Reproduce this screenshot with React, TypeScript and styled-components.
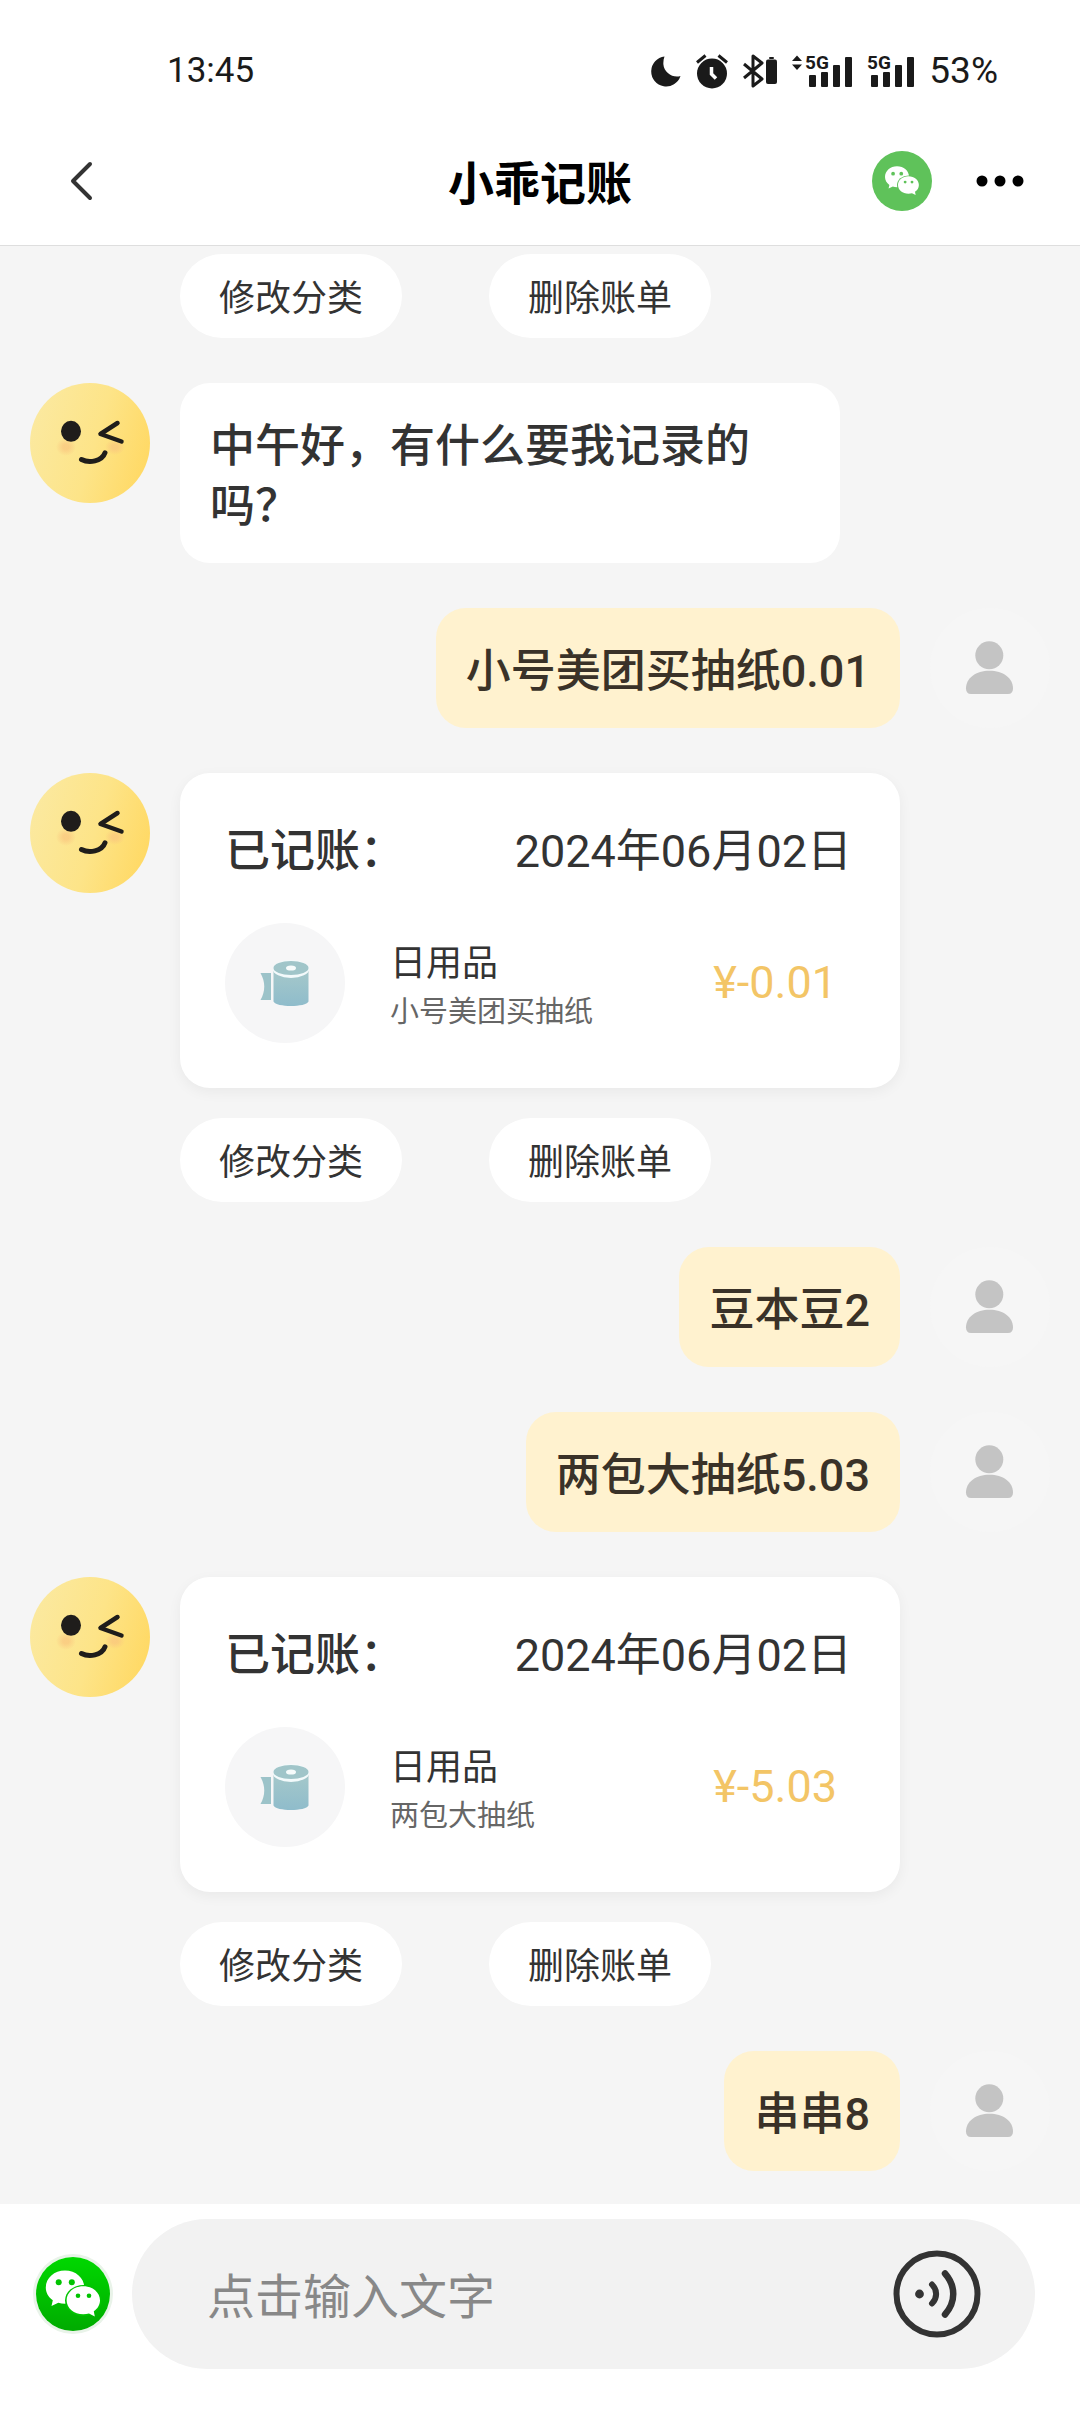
import React from "react";
import styled, { createGlobalStyle } from "styled-components";

const GlobalStyle = createGlobalStyle`
  * { box-sizing: border-box; }
  body {
    margin: 0;
    background: #ffffff;
    color: #333333;
    font-family: Roboto, "Noto Sans CJK SC", sans-serif;
  }
  button, input { font-family: inherit; color: inherit; }
  button { border: 0; padding: 0; background: none; cursor: pointer; }
  svg { display: block; flex: none; }
  p, h1, h2 { margin: 0; }
`;

const Screen = styled.div`
  min-height: 100vh;
  display: flex;
  flex-direction: column;
`;

const StatusBar = styled.div`
  height: 116px;
  padding: 26px 82px 0 167px;
  display: flex;
  align-items: center;
  justify-content: space-between;
  color: #1a1a1a;
  font-size: 35px;
  line-height: 42px;
`;

const StatusIcons = styled.div`
  display: flex;
  align-items: center;
  gap: 15px;
`;

const BatteryLevel = styled.span`
  font-size: 37px;
`;

const Header = styled.header`
  height: 130px;
  padding: 0 56px;
  display: grid;
  grid-template-columns: 1fr auto 1fr;
  align-items: center;
  border-bottom: 1px solid #dedede;
`;

const Title = styled.h1`
  padding-top: 6px;
  color: #000000;
  font-size: 46px;
  line-height: 60px;
  font-weight: 700;
`;

const HeaderTools = styled.div`
  display: flex;
  align-items: center;
  justify-content: flex-end;
  gap: 44px;
`;

const IconButton = styled.button`
  display: flex;
  align-items: center;
  justify-self: start;
`;

const BackButton = styled(IconButton)`
  padding: 0 14px;
`;

const WechatButton = styled.button<{ $size: number; $fill: string; $halo?: boolean }>`
  flex: none;
  width: ${(p) => p.$size}px;
  height: ${(p) => p.$size}px;
  border-radius: 50%;
  background: ${(p) => p.$fill};
  box-shadow: ${(p) => (p.$halo ? "0 0 0 3px #e9f3e9" : "none")};
`;

const Chat = styled.main`
  flex: 1;
  padding: 8px 30px 33px;
  display: flex;
  flex-direction: column;
  gap: 45px;
  background: #f5f5f5;
`;

const MessageRow = styled.div<{ $mine?: boolean }>`
  display: flex;
  align-items: flex-start;
  justify-content: ${(p) => (p.$mine ? "flex-end" : "flex-start")};
  gap: 30px;
`;

const MessageBody = styled.div`
  flex: 0 1 720px;
  min-width: 0;
  display: flex;
  flex-direction: column;
  gap: 30px;
`;

const AvatarSpace = styled.div`
  flex: none;
  width: 120px;
`;

const Bubble = styled.p<{ $mine?: boolean }>`
  max-width: 660px;
  padding: 34px 30px 26px;
  border-radius: 30px;
  background: ${(p) => (p.$mine ? "#fff2cf" : "#ffffff")};
  color: ${(p) => (p.$mine ? "#3a3228" : "#333333")};
  font-size: 45px;
  line-height: 60px;
  font-weight: 500;
`;

const Card = styled.section`
  padding: 49px 48px 45px 45px;
  border-radius: 30px;
  background: #ffffff;
  box-shadow: 0 4px 14px rgba(0, 0, 0, 0.05);
  display: flex;
  flex-direction: column;
  gap: 41px;
`;

const CardHead = styled.div`
  display: flex;
  justify-content: space-between;
  font-size: 45px;
  line-height: 60px;
`;

const CardTitle = styled.h2`
  font-size: inherit;
  font-weight: 500;
`;

const Entry = styled.div`
  display: flex;
  align-items: center;
  gap: 45px;
  padding-right: 15px;
`;

const EntryText = styled.div`
  flex: 1;
  padding-top: 4px;
`;

const Category = styled.p`
  font-size: 36px;
  line-height: 54px;
`;

const Note = styled.p`
  color: #666666;
  font-size: 29px;
  line-height: 42px;
`;

const Amount = styled.span`
  color: #f3c566;
  font-size: 45px;
  line-height: 60px;
`;

const Actions = styled.div`
  display: flex;
  gap: 87px;
`;

const Pill = styled.button`
  height: 84px;
  padding: 6px 39px 0;
  border-radius: 42px;
  background: #ffffff;
  font-size: 36px;
  line-height: 54px;
`;

const Composer = styled.footer`
  padding: 15px 45px 43px 36px;
  display: flex;
  align-items: center;
  gap: 22px;
  background: #ffffff;
`;

const Field = styled.div`
  flex: 1;
  height: 150px;
  padding: 0 54px 0 75px;
  border-radius: 75px;
  background: #f2f2f2;
  display: flex;
  align-items: center;
`;

const TextInput = styled.input`
  flex: 1;
  min-width: 0;
  height: 80px;
  padding: 6px 0 0;
  border: 0;
  outline: 0;
  background: transparent;
  font-size: 48px;
  &::placeholder { color: #888888; opacity: 1; }
`;

function MoonIcon() {
  return (
    <svg width="30" height="31" viewBox="0 0 30 31" fill="#1a1a1a">
      <path d="M13.500 0.500A15 15 0 1 0 29.500 20C22 22.500 13 16.500 12.400 8.500C12.200 5.500 12.600 2.800 13.500 0.500Z" />
    </svg>
  );
}

function AlarmIcon() {
  return (
    <svg width="32" height="35" viewBox="0 0 32 35" fill="none" strokeLinecap="butt">
      <circle cx="16" cy="19.500" r="15" fill="#1a1a1a" />
      <path d="M1 8.500L9.500 1.500M31 8.500L22.500 1.500" stroke="#1a1a1a" strokeWidth="3" />
      <path d="M15.500 13V20L20 24.500" stroke="#fff" strokeWidth="3.500" />
    </svg>
  );
}

function BluetoothIcon() {
  return (
    <svg width="34" height="34" viewBox="0 0 34 34" fill="none">
      <path d="M1 10L19 25L10 32V2L19 9L1 24" stroke="#1a1a1a" strokeWidth="3" strokeLinejoin="round" />
      <rect x="23" y="5.500" width="11" height="24.500" rx="2" fill="#1a1a1a" />
      <rect x="26" y="3" width="5" height="2" rx="1" fill="#1a1a1a" />
    </svg>
  );
}

function SignalIcon({ traffic }: { traffic?: boolean }) {
  return (
    <svg
      width={traffic ? 60 : 47}
      height="46"
      viewBox={traffic ? "-13 -6 60 46" : "0 -6 47 46"}
      fill="#1a1a1a"
    >
      {traffic && <path d="M-13 7L-8 1.500L-3 7ZM-13 10.500H-3L-8 16Z" />}
      <text x="0" y="15" fontSize="19" fontWeight="700" fontFamily="Roboto, sans-serif">
        5G
      </text>
      <rect x="4" y="21" width="7" height="12" rx="1" />
      <rect x="16" y="18" width="7" height="15" rx="1" />
      <rect x="28" y="11" width="7" height="22" rx="1" />
      <rect x="40" y="3" width="7" height="30" rx="1" />
    </svg>
  );
}

function BackIcon() {
  return (
    <svg width="24" height="40" viewBox="0 0 24 40" fill="none">
      <path d="M20 3L3 20L20 37" stroke="#333" strokeWidth="4" strokeLinecap="round" strokeLinejoin="round" />
    </svg>
  );
}

function MoreIcon() {
  return (
    <svg width="48" height="12" viewBox="0 0 48 12" fill="#000">
      <circle cx="6" cy="6" r="5.500" />
      <circle cx="24" cy="6" r="5.500" />
      <circle cx="42" cy="6" r="5.500" />
    </svg>
  );
}

function WechatGlyph({ size, ink, inset = 0 }: { size: number; ink: string; inset?: number }) {
  const side = 74 + inset * 2;
  return (
    <svg width={size} height={size} viewBox={`${-inset} ${-inset} ${side} ${side}`}>
      <path
        fill="#fff"
        d="M29 13.500C18.300 13.500 9.800 21 9.800 30.500C9.800 35.800 12.500 40.200 16.800 43.200L15.500 49L22.300 45.800C24.400 46.500 26.600 46.800 29 46.800C39.700 46.800 48.300 39.500 48.300 30.300C48.300 21 39.700 13.500 29 13.500Z"
      />
      <ellipse cx="47.300" cy="43.500" rx="18.300" ry="15.500" fill={ink} />
      <path
        fill="#fff"
        d="M47.300 29.300C37.900 29.300 30.600 35.500 30.600 43.300C30.600 51.200 37.900 57.300 47.300 57.300C49.300 57.300 51.300 57 53 56.500L58.800 59.500L57.800 54.300C61.600 51.800 64 47.900 64 43.300C64 35.500 56.700 29.300 47.300 29.300Z"
      />
      <g fill={ink}>
        <circle cx="22.700" cy="25.300" r="3" />
        <circle cx="35.800" cy="25.300" r="3" />
        <circle cx="42" cy="38.700" r="2.300" />
        <circle cx="53" cy="38.700" r="2.300" />
      </g>
    </svg>
  );
}

function BotAvatar() {
  return (
    <svg width="120" height="120" viewBox="0 0 120 120" fill="none" role="img" aria-label="小乖">
      <defs>
        <linearGradient id="face" x1="0" y1="0.300" x2="1" y2="0.600">
          <stop offset="0" stopColor="#fbe9a0" />
          <stop offset="0.550" stopColor="#fde488" />
          <stop offset="1" stopColor="#ffd965" />
        </linearGradient>
        <radialGradient id="blush">
          <stop offset="0.300" stopColor="#f9c57e" stopOpacity="0.700" />
          <stop offset="1" stopColor="#f9c57e" stopOpacity="0" />
        </radialGradient>
      </defs>
      <circle cx="60" cy="60" r="60" fill="url(#face)" />
      <ellipse cx="36" cy="64" rx="10" ry="9" fill="url(#blush)" />
      <ellipse cx="85" cy="64" rx="10" ry="8" fill="url(#blush)" />
      <ellipse cx="41" cy="48.300" rx="10" ry="10.500" fill="#1f1d1b" />
      <path
        d="M87.500 40L70.500 51L91.500 58.500"
        stroke="#1f1d1b"
        strokeWidth="4.500"
        strokeLinecap="round"
        strokeLinejoin="round"
      />
      <path d="M51.500 76.500C59 80.500 72 78.500 75 69.800" stroke="#1f1d1b" strokeWidth="5" strokeLinecap="round" />
    </svg>
  );
}

function UserAvatar() {
  return (
    <svg width="120" height="120" viewBox="0 0 120 120" role="img" aria-label="我">
      <circle cx="60" cy="60" r="60" fill="#f6f6f6" />
      <g fill="#c4c4c4">
        <circle cx="59.300" cy="47.300" r="14" />
        <path d="M36 80.500C36 70 46 62.700 59.500 62.700C73 62.700 83 70 83 80.500C83 84 81.300 86 78 86H41C37.700 86 36 84 36 80.500Z" />
      </g>
    </svg>
  );
}

function PaperRollIcon() {
  return (
    <svg width="120" height="120" viewBox="0 0 120 120">
      <defs>
        <linearGradient id="roll" x1="0" y1="0" x2="0" y2="1">
          <stop offset="0" stopColor="#a5c8ca" />
          <stop offset="1" stopColor="#8fbccb" />
        </linearGradient>
      </defs>
      <circle cx="60" cy="60" r="60" fill="#f6f6f7" />
      <path d="M48.500 47C50 54 81 54 83.500 47V78.500C81 84.500 51 84.500 48.500 78.500Z" fill="url(#roll)" />
      <ellipse cx="66" cy="46" rx="18.200" ry="9" fill="#f3fafb" />
      <ellipse cx="66" cy="45" rx="17.500" ry="7" fill="#a0c5c9" />
      <ellipse cx="66" cy="45" rx="5" ry="2.600" fill="#f6fbfb" />
      <path d="M35.500 50H46V77H35.500C40.500 68 40.500 59 35.500 50Z" fill="#9cc3c9" />
    </svg>
  );
}

function VoiceIcon() {
  return (
    <svg width="88" height="88" viewBox="0 0 88 88" fill="none" stroke="#333" strokeLinecap="round">
      <circle cx="44" cy="44" r="40.500" strokeWidth="6" />
      <circle cx="26.500" cy="44" r="4.400" fill="#333" stroke="none" />
      <path d="M39 34.500C44.500 40 44.500 48 39 53.500" strokeWidth="6" />
      <path d="M52 23.500C63 36 63 52 52 64.500" strokeWidth="6.500" />
    </svg>
  );
}

function BillActions() {
  return (
    <Actions>
      <Pill type="button">修改分类</Pill>
      <Pill type="button">删除账单</Pill>
    </Actions>
  );
}

function UserMessage({ text }: { text: string }) {
  return (
    <MessageRow $mine>
      <Bubble $mine>{text}</Bubble>
      <UserAvatar />
    </MessageRow>
  );
}

function BillMessage({ note, amount }: { note: string; amount: string }) {
  return (
    <MessageRow>
      <BotAvatar />
      <MessageBody>
        <Card>
          <CardHead>
            <CardTitle>已记账：</CardTitle>
            <time dateTime="2024-06-02">2024年06月02日</time>
          </CardHead>
          <Entry>
            <PaperRollIcon />
            <EntryText>
              <Category>日用品</Category>
              <Note>{note}</Note>
            </EntryText>
            <Amount>{amount}</Amount>
          </Entry>
        </Card>
        <BillActions />
      </MessageBody>
    </MessageRow>
  );
}

export default function App() {
  return (
    <Screen>
      <GlobalStyle />
      <StatusBar>
        <span>13:45</span>
        <StatusIcons>
          <MoonIcon />
          <AlarmIcon />
          <BluetoothIcon />
          <SignalIcon traffic />
          <SignalIcon />
          <BatteryLevel>53%</BatteryLevel>
        </StatusIcons>
      </StatusBar>
      <Header>
        <BackButton type="button" aria-label="返回">
          <BackIcon />
        </BackButton>
        <Title>小乖记账</Title>
        <HeaderTools>
          <WechatButton type="button" aria-label="微信" $size={60} $fill="#5fc25a">
            <WechatGlyph size={60} ink="#5fc25a" inset={11} />
          </WechatButton>
          <IconButton type="button" aria-label="更多">
            <MoreIcon />
          </IconButton>
        </HeaderTools>
      </Header>
      <Chat>
        <MessageRow>
          <AvatarSpace />
          <BillActions />
        </MessageRow>
        <MessageRow>
          <BotAvatar />
          <Bubble>中午好，有什么要我记录的吗？</Bubble>
        </MessageRow>
        <UserMessage text="小号美团买抽纸0.01" />
        <BillMessage note="小号美团买抽纸" amount="¥-0.01" />
        <UserMessage text="豆本豆2" />
        <UserMessage text="两包大抽纸5.03" />
        <BillMessage note="两包大抽纸" amount="¥-5.03" />
        <UserMessage text="串串8" />
      </Chat>
      <Composer>
        <WechatButton
          type="button"
          aria-label="微信"
          $size={74}
          $fill="linear-gradient(#00d800, #00ab00)"
          $halo
        >
          <WechatGlyph size={74} ink="#00c400" />
        </WechatButton>
        <Field>
          <TextInput type="text" aria-label="点击输入文字" placeholder="点击输入文字" />
          <IconButton type="button" aria-label="语音输入">
            <VoiceIcon />
          </IconButton>
        </Field>
      </Composer>
    </Screen>
  );
}
